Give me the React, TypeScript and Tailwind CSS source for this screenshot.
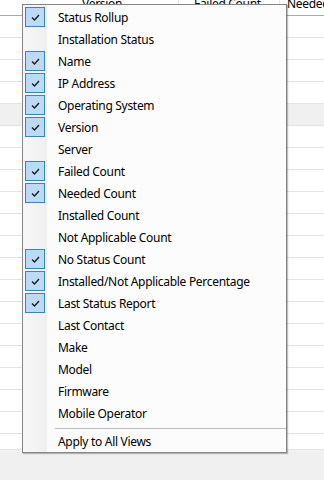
const items: { label: string; checked: boolean }[] = [
  { label: "Status Rollup", checked: true },
  { label: "Installation Status", checked: false },
  { label: "Name", checked: true },
  { label: "IP Address", checked: true },
  { label: "Operating System", checked: true },
  { label: "Version", checked: true },
  { label: "Server", checked: false },
  { label: "Failed Count", checked: true },
  { label: "Needed Count", checked: true },
  { label: "Installed Count", checked: false },
  { label: "Not Applicable Count", checked: false },
  { label: "No Status Count", checked: true },
  { label: "Installed/Not Applicable Percentage", checked: true },
  { label: "Last Status Report", checked: true },
  { label: "Last Contact", checked: false },
  { label: "Make", checked: false },
  { label: "Model", checked: false },
  { label: "Firmware", checked: false },
  { label: "Mobile Operator", checked: false },
];

const rows = Array.from({ length: 19 }, (_, i) => i);

function Check() {
  return (
    <div className="ml-[2px] flex h-[20px] w-[20px] items-center justify-center border border-[#2f84d6] bg-[#bcdaf5]">
      <svg width="9" height="7" viewBox="0 0 9 7" fill="none">
        <path d="M1 3.5 L3.5 6 L8 1" stroke="#1a1a1a" strokeWidth="1.3" />
      </svg>
    </div>
  );
}

function MenuRow({ label, checked }: { label: string; checked: boolean }) {
  return (
    <div className="flex h-[22px] items-center">
      <div className="flex h-full w-[35px] items-center">{checked && <Check />}</div>
      <span className="pt-[2px] text-[12px] leading-none tracking-[-0.3px] text-black">{label}</span>
    </div>
  );
}

export default function App() {
  return (
    <div
      className="relative h-[480px] w-[324px] overflow-hidden bg-white"
      style={{ fontFamily: '"Noto Sans", "Open Sans", sans-serif' }}
    >
      {/* list view behind the menu */}
      <div className="flex h-[16px] items-end border-b border-[#a9a9a9] text-[12px] leading-none tracking-[-0.3px] text-black">
        <div className="relative h-full w-[178px] overflow-hidden">
          <span className="absolute left-[82px] top-[-2px]">Version</span>
        </div>
        <div className="relative h-full w-[101px] overflow-hidden border-l border-[#e5e5e5]">
          <span className="absolute left-[15px] top-[-2px]">Failed Count</span>
        </div>
        <div className="relative h-full flex-1 overflow-hidden border-l border-[#e5e5e5]">
          <span className="absolute left-[7px] top-[-2px] whitespace-nowrap">Needed Count</span>
        </div>
      </div>
      {rows.map((i) => (
        <div
          key={i}
          className={`h-[22px] border-b border-[#e3e3e3] ${i === 4 ? "bg-[#f0f0f0]" : ""}`}
        />
      ))}
      <div className="h-[16px] border-b border-[#e3e3e3]" />
      <div className="h-[30px] bg-[#f0f0f0]" />

      {/* context menu */}
      <div className="absolute left-[22px] top-[4px] w-[265px] border border-[#858585] bg-[#fcfcfc] shadow-[1px_1px_1px_rgba(0,0,0,0.25)]">
        <div className="relative pt-[1px]">
          <div className="absolute bottom-0 left-0 top-0 w-[24px] bg-gradient-to-r from-[#f8f8f8] to-[#efefef]" />
          <div className="relative">
            {items.map((it) => (
              <MenuRow key={it.label} label={it.label} checked={it.checked} />
            ))}
            <div className="pl-[32px] pt-[4px] pb-[1px]">
              <div className="h-px bg-[#bdbdbd]" />
            </div>
            <MenuRow label="Apply to All Views" checked={false} />
          </div>
        </div>
      </div>
    </div>
  );
}
